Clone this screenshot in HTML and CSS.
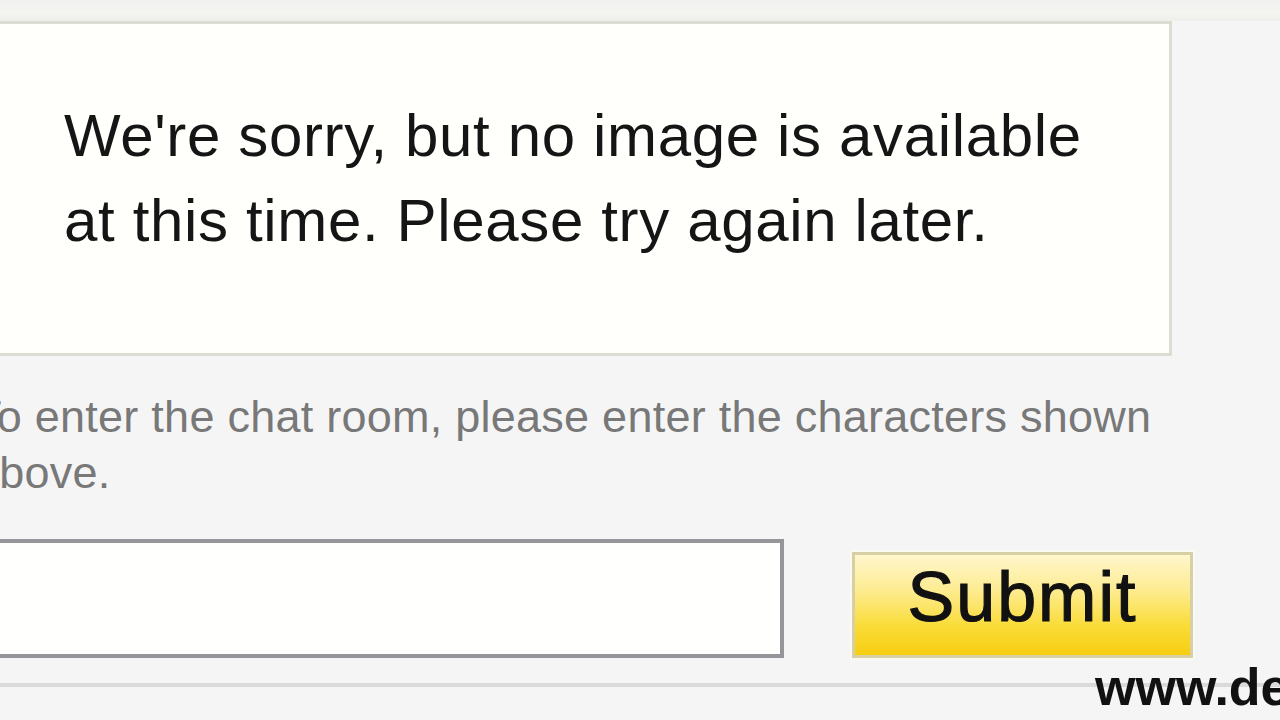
FILE: index.html
```html
<!DOCTYPE html>
<html lang="en">
<head>
<meta charset="utf-8">
<title>Chat room verification</title>
<link rel="stylesheet" href="styles.css">
</head>
<body>
<div class="topband"></div>
<main class="page">
  <section class="captcha-box">
    <p class="captcha-msg">We're sorry, but no image is available<br>at this time. Please try again later.</p>
  </section>
  <p class="instructions">To enter the chat room, please enter the characters shown<br>above.</p>
  <form class="entry-row" onsubmit="return false">
    <input class="entry-input" type="text" aria-label="Characters">
    <button class="submit-btn" type="submit">Submit</button>
  </form>
  <div class="divider"></div>
</main>
<div class="watermark">www.de</div>
</body>
</html>
```

FILE: styles.css
```css
html, body {
  margin: 0;
  padding: 0;
}
body {
  width: 1280px;
  height: 720px;
  overflow: hidden;
  background: #f5f5f6;
  font-family: "Liberation Sans", Arial, sans-serif;
  position: relative;
}
.topband {
  height: 21px;
  background: linear-gradient(#f1f1ef, #f4f4f1 60%, #eeeeea);
}
.page {
  margin-left: -40px;
  width: 1360px;
}
.captcha-box {
  box-sizing: border-box;
  width: 1212px;
  height: 335px;
  border: 3px solid #dcdcd2;
  background: #fffffc;
  padding: 69px 0 0 101px;
}
.captcha-msg {
  margin: 0;
  font-size: 60px;
  line-height: 85px;
  letter-spacing: 0.65px;
  color: #151515;
}
.instructions {
  margin: 33px 0 0 14px;
  font-size: 45px;
  line-height: 56px;
  letter-spacing: 0.25px;
  color: #787878;
}
.entry-row {
  display: flex;
  align-items: flex-end;
  gap: 68px;
  margin: 38px 0 0 0;
}
.entry-input {
  box-sizing: border-box;
  width: 824px;
  height: 119px;
  border: 4px solid #96969a;
  background: #fffffe;
  margin: 0;
  padding: 0;
  outline: none;
}
.submit-btn {
  box-sizing: border-box;
  width: 341px;
  height: 106px;
  margin: 0;
  border: 3px solid #d7cfa6;
  box-shadow: 0 0 0 2px #fbfaf2;
  background: linear-gradient(#fff6cc 0%, #fdec92 35%, #fadc3a 70%, #f7cd10 100%);
  font-family: "Liberation Sans", Arial, sans-serif;
  font-size: 70px;
  letter-spacing: 2px;
  -webkit-text-stroke: 1.2px #111;
  color: #111;
  padding: 0 0 16px 0;
  line-height: 1.15;
}
.divider {
  margin-top: 25px;
  height: 4px;
  background: #dadada;
}
.watermark {
  position: absolute;
  left: 1095px;
  top: 657px;
  font-size: 52px;
  font-weight: bold;
  color: #111;
  white-space: nowrap;
  line-height: 60px;
}
```
